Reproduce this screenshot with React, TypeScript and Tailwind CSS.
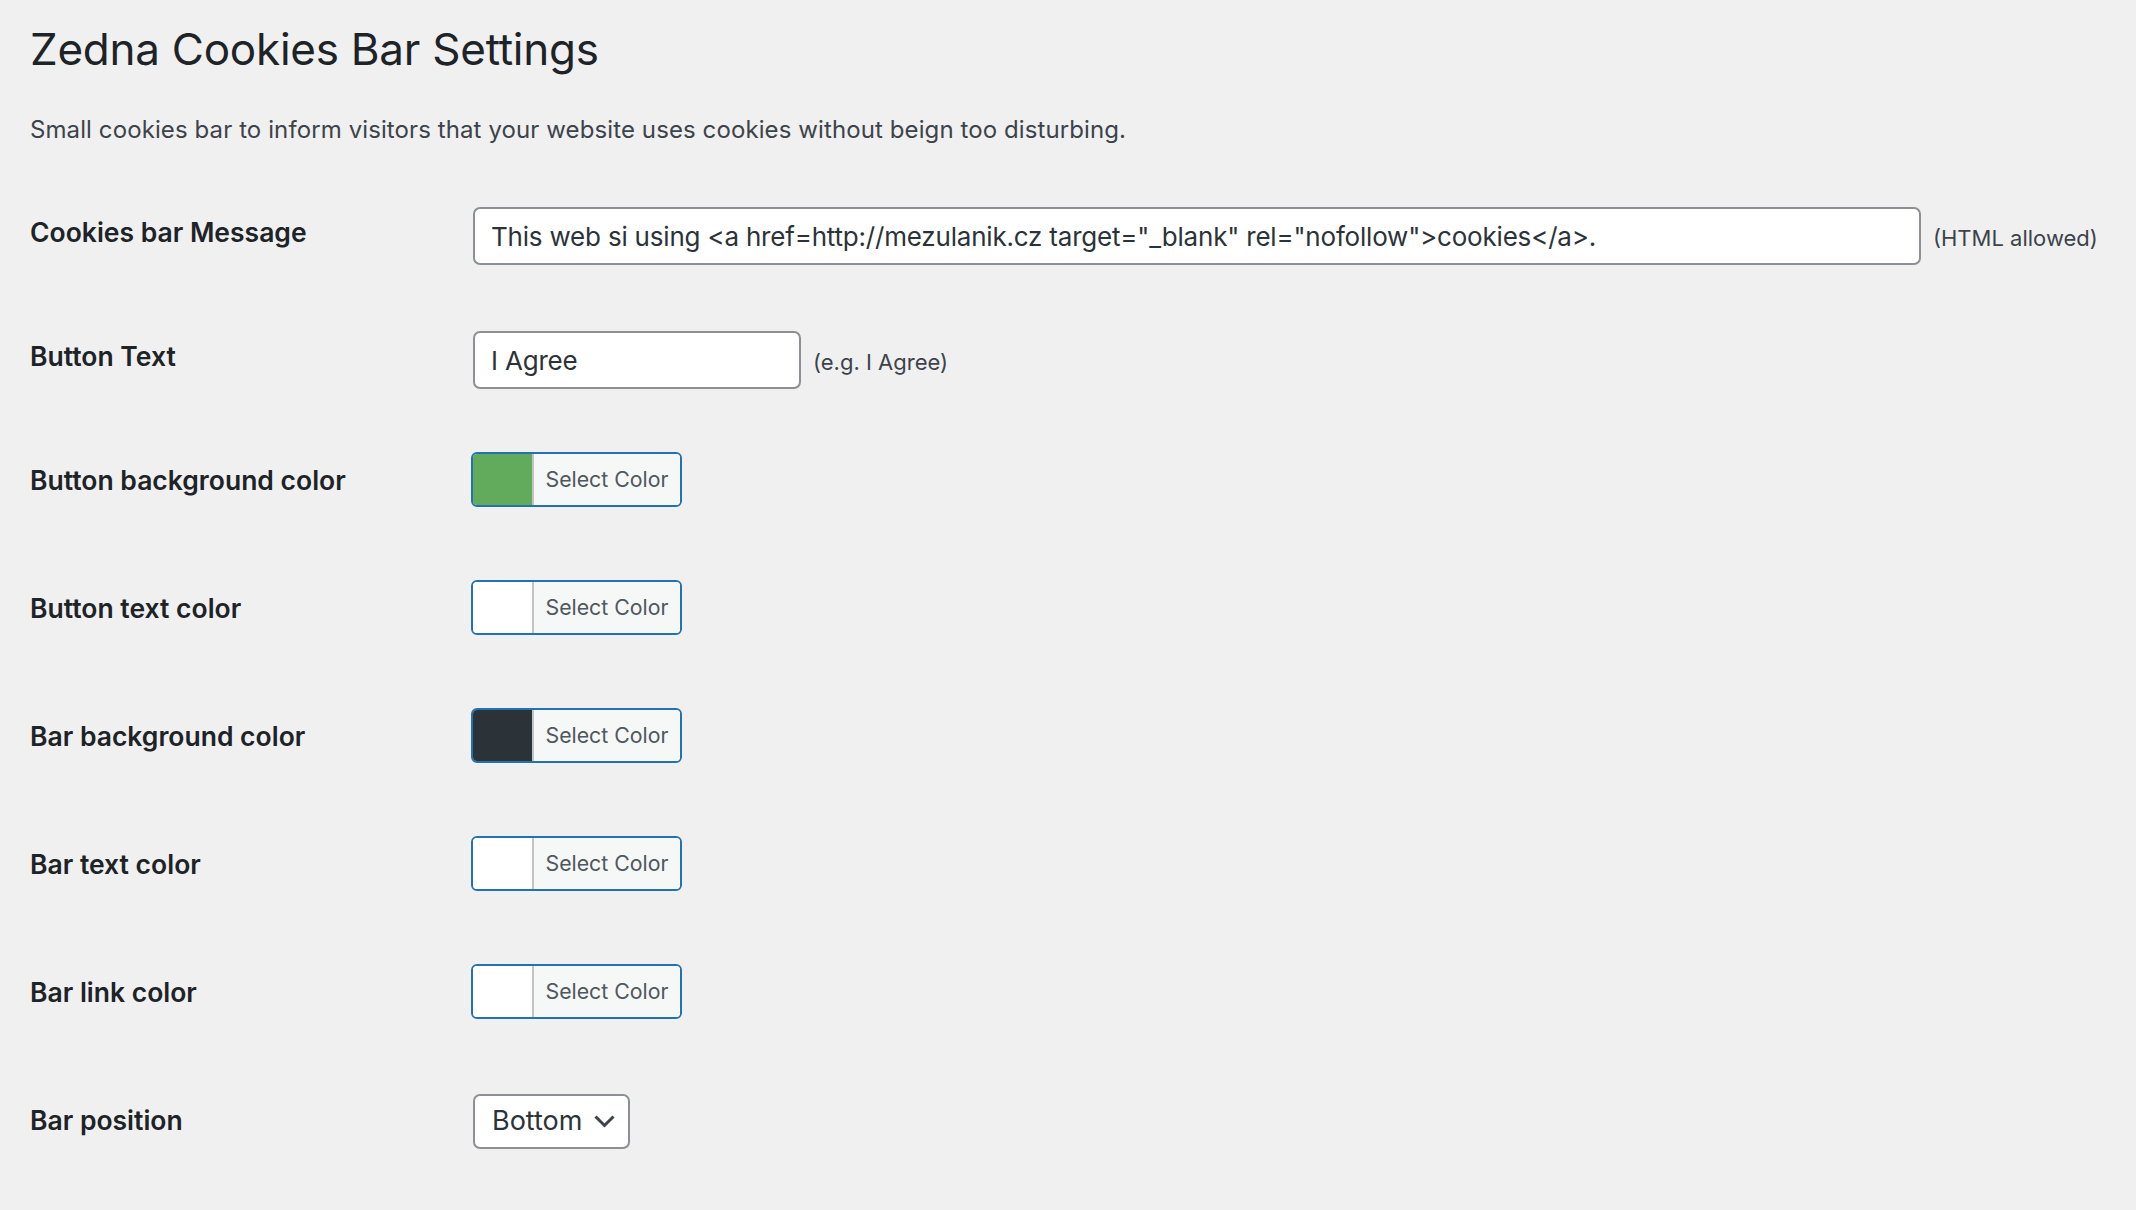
import type { ReactNode } from 'react'

function Row({ label, field, children }: { label: string; field: string; children: ReactNode }) {
  return (
    <div className="flex">
      <div className="w-[443px] shrink-0 pt-[40px] text-[26.5px] font-semibold leading-[36px] text-[#1d2327]">
        {label}
      </div>
      <div className={field}>{children}</div>
    </div>
  )
}

function ColorPicker({ swatch }: { swatch: string }) {
  return (
    <button
      type="button"
      className="-ml-[2px] flex h-[55px] w-[211px] overflow-hidden rounded-[6px] border-2 border-[#2271b1] bg-[#f6f7f7] p-0"
    >
      <span className={`block h-full w-[59px] shrink-0 ${swatch}`} />
      <span className="flex h-full flex-1 items-center justify-center border-l-2 border-[#c3c4c7] bg-[#f6f7f7] text-[21.3px] text-[#50575e]">
        Select Color
      </span>
    </button>
  )
}

export default function App() {
  return (
    <div className="min-h-screen bg-[#f0f0f1] pl-[30px] font-[Inter,sans-serif]">
      <h1 className="pt-[19px] text-[44px] font-normal leading-[60px] tracking-[-0.25px] text-[#1d2327]">
        Zedna Cookies Bar Settings
      </h1>
      <p className="mt-[31px] text-[24px] leading-[39px] tracking-[0.1px] text-[#3c434a]">
        Small cookies bar to inform visitors that your website uses cookies without beign too disturbing.
      </p>

      <div className="mt-[25px] flex flex-col">
        <Row label="Cookies bar Message" field="flex items-baseline gap-[12px] pt-[33px] pb-[33px]">
          <input
            type="text"
            defaultValue={'This web si using <a href=http://mezulanik.cz target="_blank" rel="nofollow">cookies</a>.'}
            className="h-[58px] w-[1448px] rounded-[7px] border-2 border-[#8c8f94] bg-white px-[16px] text-[26px] tracking-[-0.2px] text-[#2c3338] outline-none"
          />
          <span className="text-[22px] text-[#3c434a]">(HTML allowed)</span>
        </Row>

        <Row label="Button Text" field="flex items-baseline gap-[12px] pt-[33px] pb-[33px]">
          <input
            type="text"
            defaultValue="I Agree"
            className="h-[58px] w-[328px] rounded-[7px] border-2 border-[#8c8f94] bg-white px-[16px] text-[26px] tracking-[-0.2px] text-[#2c3338] outline-none"
          />
          <span className="text-[22px] text-[#3c434a]">(e.g. I Agree)</span>
        </Row>

        <Row label="Button background color" field="pt-[30px] pb-[43px]">
          <ColorPicker swatch="bg-[#62ab5c]" />
        </Row>
        <Row label="Button text color" field="pt-[30px] pb-[43px]">
          <ColorPicker swatch="bg-white" />
        </Row>
        <Row label="Bar background color" field="pt-[30px] pb-[43px]">
          <ColorPicker swatch="bg-[#2c3338]" />
        </Row>
        <Row label="Bar text color" field="pt-[30px] pb-[43px]">
          <ColorPicker swatch="bg-white" />
        </Row>
        <Row label="Bar link color" field="pt-[30px] pb-[43px]">
          <ColorPicker swatch="bg-white" />
        </Row>

        <Row label="Bar position" field="pt-[32px] pb-[40px]">
          <div className="flex h-[55px] w-[157px] items-center rounded-[7px] border-2 border-[#8c8f94] bg-white pl-[17px] text-[27px] text-[#2c3338]">
            <span>Bottom</span>
            <svg className="ml-[12px]" width="21" height="13" viewBox="0 0 21 13" fill="none">
              <path d="M1.5 1.5l9 9 9-9" stroke="#3c434a" strokeWidth="3" />
            </svg>
          </div>
        </Row>
      </div>
    </div>
  )
}
